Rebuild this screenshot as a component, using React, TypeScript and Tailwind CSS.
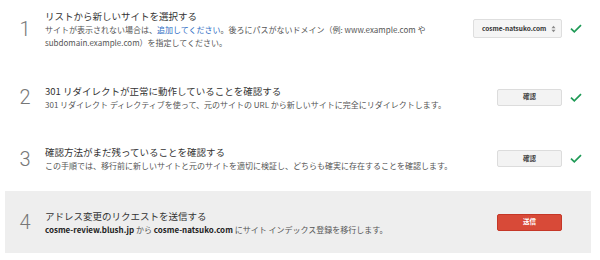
const font = { fontFamily: '"Noto Sans CJK JP", "Noto Sans", sans-serif' };

function Check({ hidden = false }: { hidden?: boolean }) {
  return (
    <div className="ml-[8px] flex w-[12px] items-center justify-center">
      {!hidden && (
        <svg width="12" height="9" viewBox="0 0 12 9">
          <polyline points="1,4.6 4.3,7.8 11,1.2" fill="none" stroke="#1e9a56" strokeWidth="1.7" />
        </svg>
      )}
    </div>
  );
}

function Step({
  n,
  title,
  children,
  right,
  check = true,
  className = "",
}: {
  n: string;
  title: string;
  children: React.ReactNode;
  right: React.ReactNode;
  check?: boolean;
  className?: string;
}) {
  return (
    <div className={"flex items-center pr-[9px] " + className}>
      <div className="w-[40px] text-center text-[20px] font-light leading-none text-[#777]" style={{ fontFamily: "Roboto, sans-serif" }}>
        {n}
      </div>
      <div className="flex-1">
        <div className="text-[9.5px] leading-[14px] text-[#333]">{title}</div>
        <div className="text-[8px] leading-[13px] text-[#555]">{children}</div>
      </div>
      {right}
      <Check hidden={!check} />
    </div>
  );
}

function GrayButton() {
  return (
    <button className="h-[17px] w-[65px] rounded-[2px] border border-[#dcdcdc] bg-[#f3f3f3] text-[6.5px] font-bold text-[#444]">
      確認
    </button>
  );
}

export default function App() {
  return (
    <div className="h-[260px] w-[600px] bg-white pl-[5px] pr-[9px]" style={font}>
      <Step
        n="1"
        title="リストから新しいサイトを選択する"
        className="h-[57px]"
        right={
          <div className="flex h-[19px] w-[89px] items-center justify-between rounded-[2px] border border-[#dedede] bg-[#f5f5f5] pl-[8px] pr-[5px]">
            <span className="text-[6.5px] font-bold text-[#333]">cosme-natsuko.com</span>
            <svg width="5" height="8" viewBox="0 0 5 8">
              <polygon points="0.5,3.2 2.5,0.8 4.5,3.2" fill="#888" />
              <polygon points="0.5,4.8 2.5,7.2 4.5,4.8" fill="#888" />
            </svg>
          </div>
        }
      >
        サイトが表示されない場合は、<span className="text-[#2c6cc4]">追加してください</span>。後ろにパスがないドメイン（例: www.example.com や
        <br />
        subdomain.example.com）を指定してください。
      </Step>
      <Step n="2" title="301 リダイレクトが正常に動作していることを確認する" className="mt-[8px] h-[64px]" right={<GrayButton />}>
        301 リダイレクト ディレクティブを使って、元のサイトの URL から新しいサイトに完全にリダイレクトします。
      </Step>
      <Step n="3" title="確認方法がまだ残っていることを確認する" className="h-[59px]" right={<GrayButton />}>
        この手順では、移行前に新しいサイトと元のサイトを適切に検証し、どちらも確実に存在することを確認します。
      </Step>
      <Step
        n="4"
        title="アドレス変更のリクエストを送信する"
        className="mt-[3px] h-[62px] bg-[#eeeeee]"
        check={false}
        right={
          <button className="h-[17px] w-[65px] rounded-[2px] border border-[#c53727] bg-[#d84a38] text-[6.5px] font-bold text-white">
            送信
          </button>
        }
      >
        <b className="text-[#222]">cosme-review.blush.jp</b> から <b className="text-[#222]">cosme-natsuko.com</b> にサイト インデックス登録を移行します。
      </Step>
    </div>
  );
}
